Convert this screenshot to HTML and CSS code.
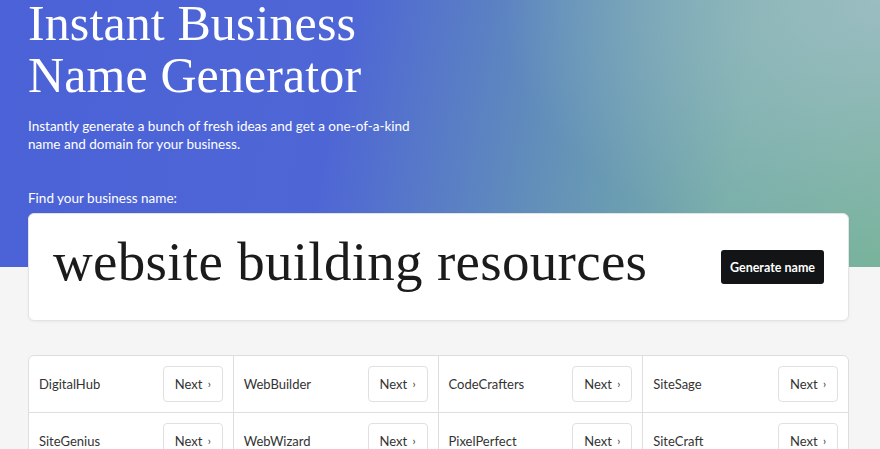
FILE: index.html
```html
<!DOCTYPE html>
<html>
<head>
<meta charset="utf-8">
<link rel="stylesheet" href="styles.css">
</head>
<body>
<section class="hero">
  <h1 class="title">Instant Business<br>Name Generator</h1>
  <p class="lead">Instantly generate a bunch of fresh ideas and get a one-of-a-kind<br>name and domain for your business.</p>
  <label class="find">Find your business name:</label>
</section>
<main class="main">
  <div class="search">
    <div class="query">website building resources</div>
    <button class="generate">Generate name</button>
  </div>
  <div class="grid">
    <div class="cell"><span class="name">DigitalHub</span><button class="next">Next <span class="chev">›</span></button></div>
    <div class="cell"><span class="name">WebBuilder</span><button class="next">Next <span class="chev">›</span></button></div>
    <div class="cell"><span class="name">CodeCrafters</span><button class="next">Next <span class="chev">›</span></button></div>
    <div class="cell"><span class="name">SiteSage</span><button class="next">Next <span class="chev">›</span></button></div>
    <div class="cell"><span class="name">SiteGenius</span><button class="next">Next <span class="chev">›</span></button></div>
    <div class="cell"><span class="name">WebWizard</span><button class="next">Next <span class="chev">›</span></button></div>
    <div class="cell"><span class="name">PixelPerfect</span><button class="next">Next <span class="chev">›</span></button></div>
    <div class="cell"><span class="name">SiteCraft</span><button class="next">Next <span class="chev">›</span></button></div>
  </div>
</main>
</body>
</html>
```
FILE: styles.css
```css
* { box-sizing: border-box; }
html, body { margin: 0; padding: 0; }
body {
  background: #f5f5f5;
  font-family: "Lato", "Open Sans", sans-serif;
  color: #222;
  overflow: hidden;
  height: 449px;
}
.hero {
  display: flow-root;
  height: 267px;
  padding: 0 28px;
  color: #fff;
  background:
    radial-gradient(ellipse 380px 260px at 100% 0%, rgba(160,190,200,0.85), rgba(160,190,200,0) 100%),
    linear-gradient(100deg, #4b62d8 0%, #4e66d5 38%, #6290b9 62%, #77aea8 82%, #79b39c 100%);
}
.title {
  margin: -3px 0 0;
  font-family: "Liberation Serif", "DejaVu Serif", serif;
  font-weight: 400;
  font-size: 50px;
  line-height: 52px;
  letter-spacing: 0.1px;
}
.lead {
  margin: 16px 0 0;
  font-size: 13.5px;
  line-height: 18px;
}
.find {
  display: block;
  margin-top: 36px;
  font-size: 13.5px;
  line-height: 18px;
}
.main {
  margin-top: -54px;
  padding: 0 31px 0 28px;
}
.search {
  height: 108px;
  background: #fff;
  border: 1px solid #e3e3e3;
  border-radius: 6px;
  box-shadow: 0 1px 3px rgba(0,0,0,0.05);
  display: flex;
  align-items: center;
  justify-content: space-between;
  padding: 0 24px 0 24px;
}
.query {
  font-family: "Liberation Serif", "DejaVu Serif", serif;
  font-size: 55px;
  color: #1b1b1b;
  letter-spacing: 0.3px;
  margin-top: -12px;
}
.generate {
  background: #121416;
  color: #fff;
  border: 0;
  border-radius: 3px;
  height: 34px;
  width: 103px;
  padding: 0;
  font-family: "Lato", "Open Sans", sans-serif;
  font-size: 12.5px;
  font-weight: 700;
}
.grid {
  margin-top: 34px;
  display: grid;
  grid-template-columns: repeat(4, 1fr);
  background: #fff;
  border: 1px solid #dedede;
  border-radius: 6px;
  overflow: hidden;
}
.cell {
  height: 57px;
  display: flex;
  align-items: center;
  justify-content: space-between;
  padding: 0 10px 0 10px;
  border-right: 1px solid #dedede;
  border-bottom: 1px solid #dedede;
}
.cell:nth-child(4n) { border-right: 0; }
.name {
  font-size: 13px;
  color: #333;
}
.next {
  height: 36px;
  width: 60px;
  background: #fff;
  border: 1px solid #e0e0e0;
  border-radius: 4px;
  font-family: "Lato", "Open Sans", sans-serif;
  font-size: 13px;
  color: #333;
  padding: 0;
}
.chev { font-size: 11px; margin-left: 2px; vertical-align: 1px; }
```
